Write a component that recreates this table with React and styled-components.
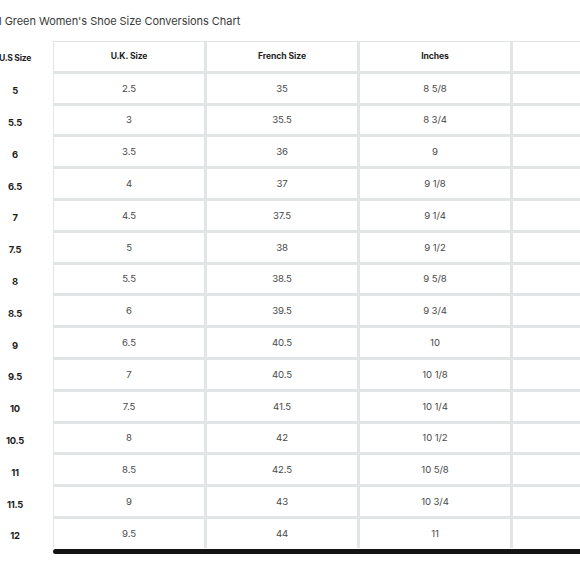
import React from 'react';
import styled, { createGlobalStyle } from 'styled-components';

const GlobalStyle = createGlobalStyle`
    html, body {
        margin: 0;
        padding: 0;
        background: #ffffff;
        overflow: hidden;
    }
    body {
        font-family: Inter, "Open Sans", "Liberation Sans", sans-serif;
    }
`;

const Page = styled.div`
    width: 580px;
    height: 580px;
    overflow: hidden;
    display: flex;
    flex-direction: column;
`;

const Title = styled.h1`
    margin: 14px 0 0 -1px;
    font-size: 11px;
    font-weight: 400;
    line-height: 14px;
    color: #3a3a3a;
    white-space: nowrap;
    letter-spacing: -0.05px;
`;

const ChartArea = styled.div`
    display: flex;
    margin: 13px 0 0 -23px;
`;

const SideColumn = styled.div`
    flex: 0 0 76px;
    display: grid;
    grid-auto-rows: 28.8px;
    row-gap: 3px;
    padding-top: 1px;
`;

const SideLabel = styled.div`
    display: flex;
    align-items: center;
    justify-content: center;
    padding-top: ${props => (props.$header ? '4px' : '5px')};
    box-sizing: border-box;
    font-size: ${props => (props.$header ? '8.6px' : '9.4px')};
    font-weight: 700;
    color: #1d1d1d;
    letter-spacing: -0.3px;
    white-space: nowrap;
`;

const Right = styled.div`
    display: flex;
    flex-direction: column;
`;

const Grid = styled.div`
    display: grid;
    grid-template-columns: repeat(5, 150px);
    grid-auto-rows: 28.8px;
    gap: 3px;
    padding: 1px 0 0 1px;
    background: #e2e5e5;
    width: max-content;
`;

const Cell = styled.div`
    background: #ffffff;
    display: flex;
    align-items: center;
    justify-content: center;
    font-size: ${props => (props.$header ? '8.6px' : '9.6px')};
    font-weight: ${props => (props.$header ? 700 : 400)};
    color: ${props => (props.$header ? '#1d1d1d' : '#4a4a4a')};
    letter-spacing: -0.1px;
    white-space: nowrap;
`;

const BottomBar = styled.div`
    margin-top: 1px;
    height: 5px;
    width: 640px;
    background: #141414;
    border-radius: 3px 0 0 3px;
`;

const rows = [
    ['5', '2.5', '35', '8 5/8'],
    ['5.5', '3', '35.5', '8 3/4'],
    ['6', '3.5', '36', '9'],
    ['6.5', '4', '37', '9 1/8'],
    ['7', '4.5', '37.5', '9 1/4'],
    ['7.5', '5', '38', '9 1/2'],
    ['8', '5.5', '38.5', '9 5/8'],
    ['8.5', '6', '39.5', '9 3/4'],
    ['9', '6.5', '40.5', '10'],
    ['9.5', '7', '40.5', '10 1/8'],
    ['10', '7.5', '41.5', '10 1/4'],
    ['10.5', '8', '42', '10 1/2'],
    ['11', '8.5', '42.5', '10 5/8'],
    ['11.5', '9', '43', '10 3/4'],
    ['12', '9.5', '44', '11'],
];

const headers = ['U.K. Size', 'French Size', 'Inches', '', ''];

function App() {
    return (
        <>
            <GlobalStyle />
            <Page>
                <Title>l Green Women's Shoe Size Conversions Chart</Title>
                <ChartArea>
                    <SideColumn>
                        <SideLabel $header>U.S Size</SideLabel>
                        {rows.map(r => (
                            <SideLabel key={r[0]}>{r[0]}</SideLabel>
                        ))}
                    </SideColumn>
                    <Right>
                        <Grid>
                            {headers.map((h, i) => (
                                <Cell $header key={'h' + i}>{h}</Cell>
                            ))}
                            {rows.map(r => (
                                <React.Fragment key={'r' + r[0]}>
                                    <Cell>{r[1]}</Cell>
                                    <Cell>{r[2]}</Cell>
                                    <Cell>{r[3]}</Cell>
                                    <Cell />
                                    <Cell />
                                </React.Fragment>
                            ))}
                        </Grid>
                        <BottomBar />
                    </Right>
                </ChartArea>
            </Page>
        </>
    );
}

export default App;
